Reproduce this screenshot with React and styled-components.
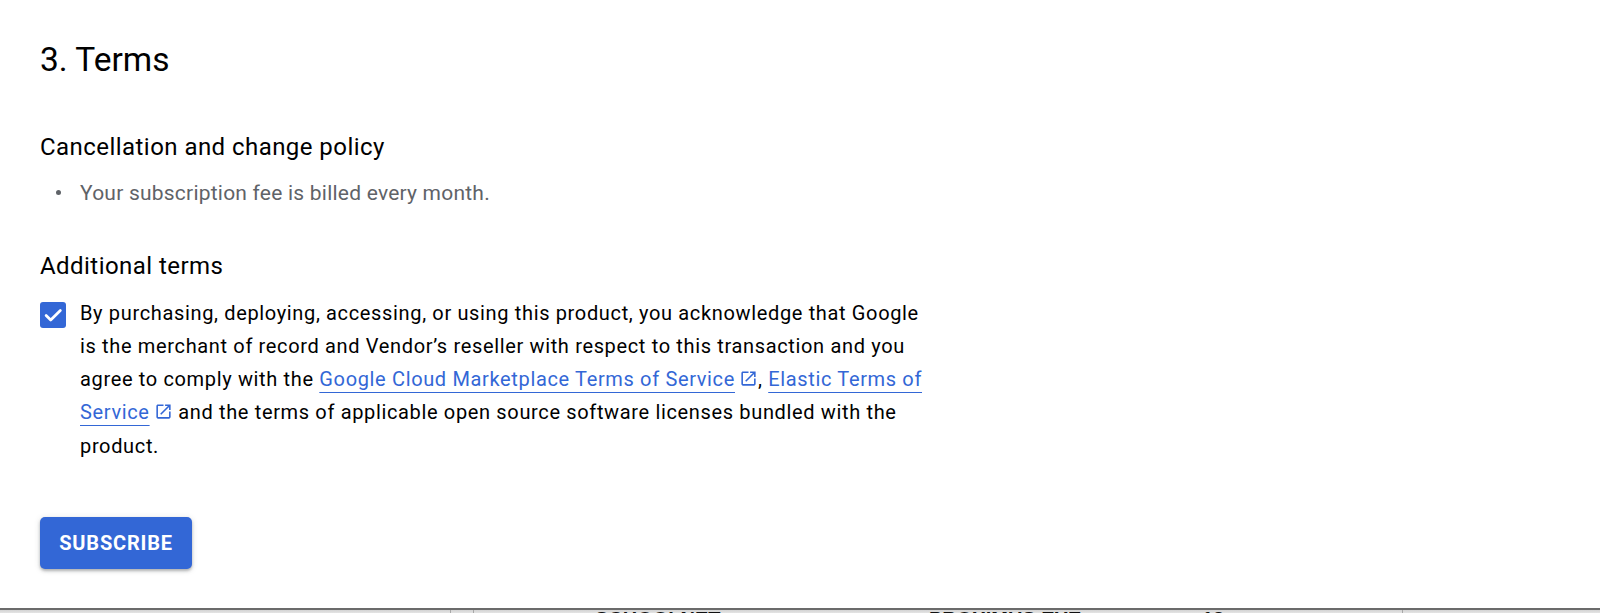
import React from 'react'
import styled, { createGlobalStyle } from 'styled-components'

const GlobalStyle = createGlobalStyle`
  html, body {
    margin: 0;
    padding: 0;
    background: #fff;
  }
  body {
    font-family: Roboto, "Liberation Sans", Arial, sans-serif;
    color: #202124;
  }
`

const Screen = styled.div`
  height: 100vh;
  display: flex;
  flex-direction: column;
  overflow: hidden;
`

const Main = styled.main`
  flex: 1;
  padding: 40px 0 0 40px;
`

const Title = styled.h2`
  margin: 0;
  font-size: 33.5px;
  line-height: 40px;
  font-weight: 400;
  color: #000;
`

const SubTitle = styled.h3`
  margin: ${p => p.$top}px 0 0;
  font-size: 24px;
  line-height: 28px;
  font-weight: 400;
  letter-spacing: 0.45px;
  color: #000;
`

const Bullets = styled.ul`
  margin: 20.5px 0 0;
  padding: 0 0 0 40px;
  list-style: none;
  li {
    position: relative;
    font-size: 21px;
    line-height: 24px;
    letter-spacing: 0.22px;
    color: #5f6368;
  }
  li::before {
    content: '';
    position: absolute;
    left: -24px;
    top: 8.5px;
    width: 5px;
    height: 5px;
    border-radius: 50%;
    background: #5f6368;
  }
`

const AgreeRow = styled.label`
  margin-top: 17px;
  display: flex;
  align-items: flex-start;
  gap: 14px;
`

const Box = styled.span`
  flex: none;
  width: 26px;
  height: 26px;
  margin-top: 5.5px;
  border-radius: 3px;
  background: #3367d6;
  display: grid;
  place-items: center;
`

const Agreement = styled.p`
  margin: 0;
  width: 852px;
  font-size: 20px;
  line-height: 33.3px;
  letter-spacing: 0.65px;
  color: #000;
`

const Link = styled.a`
  color: #3367d6;
  text-decoration: underline;
  text-decoration-thickness: 1px;
  text-underline-offset: 6px;
  cursor: pointer;
`

const OpenIcon = styled.svg`
  width: 19px;
  height: 19px;
  margin-left: 4px;
  vertical-align: -2px;
  fill: #3367d6;
`

const Subscribe = styled.button`
  margin-top: 54px;
  width: 152px;
  height: 52px;
  border: 0;
  border-radius: 5px;
  background: #3367d6;
  color: #fff;
  font-family: Roboto, "Liberation Sans", Arial, sans-serif;
  font-size: 20px;
  font-weight: 700;
  letter-spacing: 0.8px;
  box-shadow: 0 2px 3px rgba(60, 64, 67, 0.35), 0 1px 6px rgba(60, 64, 67, 0.15);
  cursor: pointer;
`

const Behind = styled.div`
  flex: none;
  height: 3px;
  border-top: 2px solid #6b6b6b;
  background: linear-gradient(#d4d4d4, #e4e4e4);
  display: flex;
  overflow: hidden;
`

const Cell = styled.div`
  flex: none;
  width: ${p => p.$w}px;
  border-right: ${p => (p.$line ? '1px solid #a8a8a8' : '0')};
  font-family: "Liberation Sans", Arial, sans-serif;
  font-weight: 700;
  font-size: 20px;
  line-height: 18px;
  color: #111;
  white-space: nowrap;
`

const ExternalIcon = () => (
  <OpenIcon viewBox="0 0 24 24">
    <path d="M19 19H5V5h7V3H5c-1.11 0-2 .9-2 2v14c0 1.1.89 2 2 2h14c1.1 0 2-.9 2-2v-7h-2v7zM14 3v2h3.59l-9.83 9.83 1.41 1.41L19 6.41V10h2V3h-7z" />
  </OpenIcon>
)

const App = () => {
  return (
    <Screen>
      <GlobalStyle />
      <Main>
        <Title>3. Terms</Title>
        <SubTitle $top={52.5}>Cancellation and change policy</SubTitle>
        <Bullets>
          <li>Your subscription fee is billed every month.</li>
        </Bullets>
        <SubTitle $top={46.5}>Additional terms</SubTitle>
        <AgreeRow>
          <Box>
            <svg width="22" height="22" viewBox="0 0 24 24">
              <path d="M4.5 12.5l5 5L20 7" fill="none" stroke="#fff" strokeWidth="3" strokeLinecap="round" strokeLinejoin="round" />
            </svg>
          </Box>
          <Agreement>
            By purchasing, deploying, accessing, or using this product, you acknowledge that Google
            is the merchant of record and Vendor’s reseller with respect to this transaction and you
            agree to comply with the <Link>Google Cloud Marketplace Terms of Service</Link>
            <ExternalIcon />, <Link>Elastic Terms of Service</Link>
            <ExternalIcon /> and the terms of applicable open source software licenses bundled with the
            product.
          </Agreement>
        </AgreeRow>
        <Subscribe>SUBSCRIBE</Subscribe>
      </Main>
      <Behind>
        <Cell $w={450} $line />
        <Cell $w={22} $line />
        <Cell $w={121} />
        <Cell $w={334}>SCHOOLNET</Cell>
        <Cell $w={273}>PROXIMUS EYE</Cell>
        <Cell $w={200} $line>12 aug</Cell>
      </Behind>
    </Screen>
  )
}

export default App
